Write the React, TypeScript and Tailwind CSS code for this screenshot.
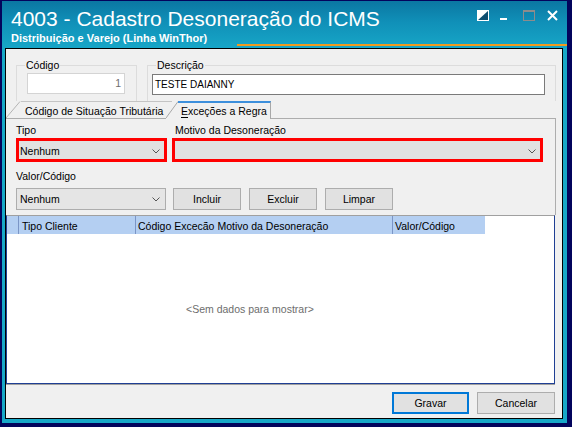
import React from 'react';

function Chevron() {
  return (
    <svg width="8" height="5" viewBox="0 0 8 5" className="shrink-0">
      <path d="M0.5 0.5 L4 4 L7.5 0.5" fill="none" stroke="#555555" strokeWidth="1" />
    </svg>
  );
}

function TitleBar() {
  return (
    <div className="h-[47px] shrink-0 flex flex-col pl-[9px] bg-[linear-gradient(180deg,#0b77a2_0%,#1090b8_45%,#17a6c7_100%)] text-white">
      <div className="flex items-start mt-[6px] h-[24px]">
        <div className="text-[21px] leading-[24px] whitespace-nowrap">4003 - Cadastro Desoneração do ICMS</div>
        <div className="ml-auto mr-[9px] mt-[3px] flex items-start">
          {/* restore */}
          <svg width="12" height="11" viewBox="0 0 12 11">
            <rect x="0.5" y="0.5" width="11" height="10" fill="#0d4f70" stroke="#ffffff" />
            <path d="M0 0 H12 L0 11 Z" fill="#ffffff" />
          </svg>
          {/* minimize */}
          <svg width="7" height="11" viewBox="0 0 7 11" className="ml-[11px]">
            <rect x="0" y="8" width="7" height="2" fill="#ffffff" />
          </svg>
          {/* maximize */}
          <svg width="12" height="11" viewBox="0 0 12 11" className="ml-[16px]">
            <rect x="0.5" y="0.5" width="11" height="10" fill="none" stroke="#8c8c8c" />
            <rect x="0" y="0" width="12" height="2" fill="#8c8c8c" />
          </svg>
          {/* close */}
          <svg width="11" height="11" viewBox="0 0 11 11" className="ml-[12px]">
            <path d="M1 1 L10 10 M10 1 L1 10" stroke="#ffffff" strokeWidth="2" />
          </svg>
        </div>
      </div>
      <div className="flex mt-[1px] h-[16px]">
        <div className="text-[11px] leading-[13px] font-bold whitespace-nowrap">Distribuição e Varejo (Linha WinThor)</div>
        <div className="ml-auto self-end mb-[2px] w-[330px] h-[2px] bg-[#f29a1c]" />
      </div>
    </div>
  );
}

function Button({ label, primary = false, width }: { label: string; primary?: boolean; width: string }) {
  return (
    <div
      className={`${width} h-[22px] flex items-center justify-center bg-[#e1e1e1] ${
        primary ? 'border-2 border-[#0078d7]' : 'border border-[#adadad]'
      }`}
    >
      {label}
    </div>
  );
}

export default function App() {
  return (
    <div className="w-[572px] h-[427px] bg-[#03045c] pt-[1px] pl-[2px] pr-[5px] pb-[4px] font-['Liberation_Sans',Arial,sans-serif] text-[10.5px] leading-[13px] text-black">
      <div className="h-full flex flex-col bg-[#17a8c8]">
        <TitleBar />
        <div className="flex-1 flex pl-[3px] pr-[4px] pb-[4px]">
          <div className="flex-1 flex flex-col border border-black bg-[#f0f0f0]">
            {/* Código / Descrição */}
            <div className="h-[52px] shrink-0 flex pl-[10px] pr-[6px] gap-[10px]">
              <div className="w-[121px] h-[36px] mt-[16px] border border-b-0 border-[#dcdcdc]">
                <div className="-mt-[7px] ml-[8px] px-[1px] w-fit bg-[#f0f0f0]">Código</div>
                <div className="mt-[1px] ml-[10px] w-[98px] h-[21px] border border-[#d4d4d4] bg-white flex items-center justify-end pr-[3px] text-[#6d6d6d]">
                  1
                </div>
              </div>
              <div className="flex-1 h-[36px] mt-[16px] border border-b-0 border-[#dcdcdc]">
                <div className="-mt-[7px] ml-[8px] px-[1px] w-fit bg-[#f0f0f0]">Descrição</div>
                <div className="mt-[2px] ml-[4px] w-[393px] h-[21px] border border-[#7a7a7a] bg-white flex items-center pl-[2px] text-[10px]">
                  TESTE DAIANNY
                </div>
              </div>
            </div>

            {/* Tabs */}
            <div className="relative z-10 h-[17px] shrink-0 flex items-start">
              <svg width="15" height="17" viewBox="0 0 15 17" className="shrink-0">
                <path d="M0 17 L14 0.5" stroke="#b4b4b4" strokeWidth="1" fill="none" />
              </svg>
              <div className="w-[151px] h-[17px] shrink-0 border-t border-[#c4c4c4] pl-[4px] pt-[3px] whitespace-nowrap">
                Código de Situação Tributária
              </div>
              <svg width="12" height="18" viewBox="0 0 12 18" className="shrink-0 -ml-[6px]">
                <path d="M0 17 L12 0 L12 18 L0 18 Z" fill="#f0f0f0" />
                <path d="M0 17 L12 0.5" stroke="#a8a8a8" strokeWidth="1" fill="none" />
              </svg>
              <div className="w-[93px] h-[18px] shrink-0 -mb-[1px] border-t-2 border-t-[#3c8fdc] border-r border-r-[#a8a8a8] bg-[#f0f0f0] pl-[3px] pt-[2px] whitespace-nowrap">
                <span className="underline underline-offset-2">E</span>xceções a Regra
              </div>
            </div>

            {/* Tab panel */}
            <div className="h-[97px] shrink-0 mr-[6px] border-t border-r border-[#adadad] pl-[10px]">
              <div className="mt-[5px] flex gap-[5px]">
                <div className="w-[151px]">Tipo</div>
                <div className="w-[371px] pl-[3px]">Motivo da Desoneração</div>
              </div>
              <div className="mt-[1px] flex gap-[5px]">
                <div className="w-[151px] h-[24px] border-[3px] border-[#ff0000] bg-[#e1e1e1] flex items-center pt-[3px] pl-[1px] pr-[4px]">
                  <span className="flex-1">Nenhum</span>
                  <Chevron />
                </div>
                <div className="w-[371px] h-[24px] border-[3px] border-[#ff0000] bg-[#e1e1e1] flex items-center justify-end pt-[3px] pr-[4px]">
                  <Chevron />
                </div>
              </div>
              <div className="mt-[8px]">Valor/Código</div>
              <div className="mt-[5px] flex">
                <div className="w-[150px] h-[22px] border border-[#adadad] bg-[#e5e5e5] flex items-center pl-[3px] pr-[5px]">
                  <span className="flex-1">Nenhum</span>
                  <Chevron />
                </div>
                <div className="ml-[7px] flex gap-[8px]">
                  <Button label="Incluir" width="w-[68px]" />
                  <Button label="Excluir" width="w-[68px]" />
                  <Button label="Limpar" width="w-[68px]" />
                </div>
              </div>
            </div>

            {/* Grid */}
            <div className="h-[169px] shrink-0 mr-[7px] border-x border-b border-[#1f3f94] border-t border-t-[#a0a0a0] bg-white shadow-[0_1px_0_#a0a0a0] flex flex-col">
              <div className="w-[478px] h-[18px] shrink-0 flex bg-[#b4cff2] whitespace-nowrap">
                <div className="w-[11px]" />
                <div className="w-[117px] border-l border-[#7b95c6] pl-[3px] pt-[4px]">Tipo Cliente</div>
                <div className="w-[257px] border-l border-[#7b95c6] pl-[2px] pt-[4px]">Código Excecão Motivo da Desoneração</div>
                <div className="w-[93px] border-l border-[#7b95c6] pl-[2px] pt-[4px]">Valor/Código</div>
              </div>
              <div className="pt-[69px] pl-[179px] text-[#6d6d6d] whitespace-nowrap">&lt;Sem dados para mostrar&gt;</div>
            </div>

            {/* Footer buttons */}
            <div className="flex-1 flex justify-end items-start pt-[8px] pr-[7px] gap-[8px]">
              <Button label="Gravar" width="w-[77px]" primary />
              <Button label="Cancelar" width="w-[78px]" />
            </div>
          </div>
        </div>
      </div>
    </div>
  );
}
